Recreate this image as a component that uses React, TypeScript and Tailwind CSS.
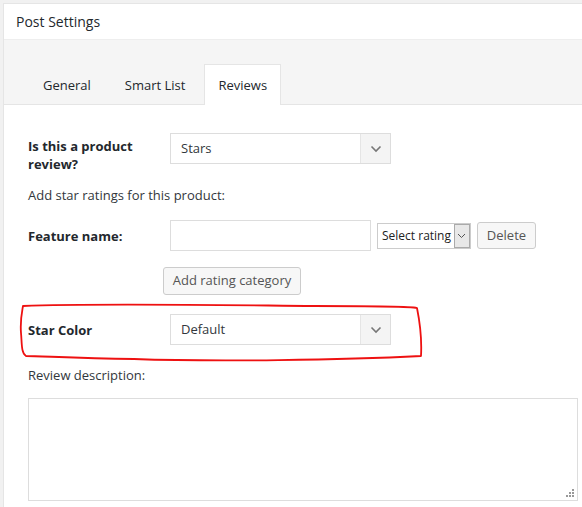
import type { ReactNode } from "react"

function Chevron() {
  return (
    <svg width="12" height="8" viewBox="0 0 12 8" fill="none">
      <path d="M1.5 1.5 L6 6 L10.5 1.5" stroke="#777" strokeWidth="1.6" />
    </svg>
  )
}

function Select({ value }: { value: string }) {
  return (
    <div className="flex h-[31px] w-[221px] items-stretch border border-[#ddd] bg-white">
      <span className="flex flex-1 items-center pl-[10px] text-[13px] text-[#32373c]">{value}</span>
      <span className="flex w-[30px] items-center justify-center border-l border-[#e5e5e5] bg-[#f4f4f4]">
        <Chevron />
      </span>
    </div>
  )
}

function Label({ children }: { children: ReactNode }) {
  return <div className="w-[142px] text-[13px] font-bold leading-[18px] text-[#23282d]">{children}</div>
}

export default function App() {
  return (
    <main className="min-h-screen bg-[#f1f1f1] pl-[3px] pt-[3px] font-['Open_Sans',sans-serif] text-[#444]">
      <section className="relative h-[504px] overflow-hidden border-l border-t border-[#e5e5e5] bg-white">
        <div className="flex h-[36px] items-center border-b border-[#eee] pl-[12px] text-[14px] font-medium text-[#23282d]">
          Post Settings
        </div>
        <div className="flex h-[65px] items-end border-b border-[#e5e5e5] bg-[#f5f5f5] pl-[22px]">
          <div className="flex h-[40px] items-center px-[17px] pt-[3px] text-[13px] text-[#23282d]">General</div>
          <div className="flex h-[40px] items-center px-[17px] pt-[3px] text-[13px] text-[#23282d]">Smart List</div>
          <div className="-mb-px ml-[2px] flex h-[41px] items-center border border-b-0 border-[#e5e5e5] bg-white px-[13px] pt-[2px] text-[13px] text-[#23282d]">
            Reviews
          </div>
        </div>

        <div className="pl-[24px] pt-[28px]">
          <div className="flex items-start">
            <div className="pt-[4px]">
              <Label>
                Is this a product
                <br />
                review?
              </Label>
            </div>
            <Select value="Stars" />
          </div>

          <div className="mt-[13px] text-[13px] leading-[18px] text-[#32373c]">Add star ratings for this product:</div>

          <div className="mt-[16px] flex items-center">
            <Label>Feature name:</Label>
            <div className="h-[31px] w-[201px] border border-[#ddd] bg-white" />
            <div className="ml-[6px] flex h-[26px] items-stretch border border-[#ccc] bg-white">
              <span className="flex items-center pl-[4px] pr-[3px] text-[12px] text-[#222]">Select rating</span>
              <span className="flex w-[16px] items-center justify-center border border-[#aaa] bg-[#e8e8e8]">
                <svg width="9" height="6" viewBox="0 0 9 6" fill="none">
                  <path d="M1 1 L4.5 4.5 L8 1" stroke="#555" strokeWidth="1" />
                </svg>
              </span>
            </div>
            <div className="ml-[6px] flex h-[27px] w-[59px] items-center justify-center rounded-[3px] border border-[#ccc] bg-[#f7f7f7] text-[13px] text-[#555]">
              Delete
            </div>
          </div>

          <div className="mt-[16px] ml-[135px] flex h-[28px] w-[138px] items-center justify-center rounded-[3px] border border-[#ccc] bg-[#f7f7f7] text-[13px] text-[#555]">
            Add rating category
          </div>

          <div className="mt-[19px] flex items-center">
            <Label>Star Color</Label>
            <Select value="Default" />
          </div>

          <div className="mt-[21px] text-[13px] leading-[18px] text-[#32373c]">Review description:</div>

          <div className="relative mt-[14px] h-[103px] w-[550px] border border-[#ddd] bg-white">
            <svg className="absolute bottom-[2px] right-[2px]" width="9" height="9" viewBox="0 0 9 9">
              <rect x="6" y="0" width="2" height="2" fill="#999" />
              <rect x="3" y="3" width="2" height="2" fill="#999" />
              <rect x="6" y="3" width="2" height="2" fill="#999" />
              <rect x="0" y="6" width="2" height="2" fill="#999" />
              <rect x="3" y="6" width="2" height="2" fill="#999" />
              <rect x="6" y="6" width="2" height="2" fill="#999" />
            </svg>
          </div>
        </div>

        <svg className="pointer-events-none absolute left-[10px] top-[294px]" width="420" height="70" viewBox="0 0 420 70" fill="none">
          <path
            d="M9 8 C80 5 200 7 300 8 C360 8 395 8 403 10 C406 25 408 40 407 58 C330 62 200 64 120 61 C60 60 25 58 12 58 C7 55 8 45 7 35 C6 22 8 14 9 8 Z"
            stroke="#e11"
            strokeWidth="1.8"
            strokeLinejoin="round"
          />
        </svg>
      </section>
    </main>
  )
}
